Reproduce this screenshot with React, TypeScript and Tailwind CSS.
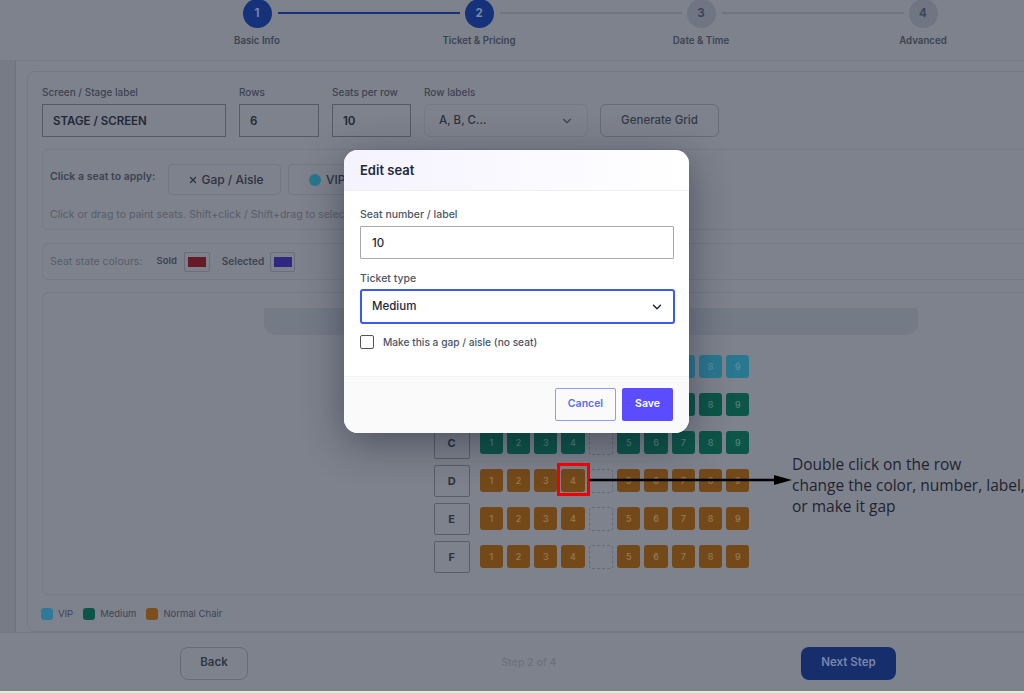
import { ChevronDown, X } from "lucide-react";

const steps = [
  { n: 1, label: "Basic Info", active: true },
  { n: 2, label: "Ticket & Pricing", active: true },
  { n: 3, label: "Date & Time", active: false },
  { n: 4, label: "Advanced", active: false },
];

const rows = [
  { label: "A", kind: "vip" },
  { label: "B", kind: "medium" },
  { label: "C", kind: "medium" },
  { label: "D", kind: "normal" },
  { label: "E", kind: "normal" },
  { label: "F", kind: "normal" },
];

const seatClass: Record<string, string> = {
  vip: "bg-[#2a7790] text-[#5a8ea0]",
  medium: "bg-[#0c5548] text-[#55837a]",
  normal: "bg-[#74491a] text-[#957b58]",
};

function Seat({ n, kind }: { n: number; kind: string }) {
  return (
    <div
      className={`flex h-[23px] w-[23.25px] items-center justify-center rounded-[3px] text-[9px] font-medium ${seatClass[kind]}`}
    >
      {n}
    </div>
  );
}

function SeatRow({ label, kind }: { label: string; kind: string }) {
  return (
    <div className="flex h-[32px] items-center">
      <div className="flex h-[32px] w-[36px] items-center justify-center rounded-[2px] border border-[#585d6a] text-[11px] font-bold text-[#2c3240]">
        {label}
      </div>
      <div className="ml-[10px] flex gap-[4px]">
        {[1, 2, 3, 4].map((n) => (
          <Seat key={n} n={n} kind={kind} />
        ))}
        <div className="h-[24px] w-[24.5px] rounded-[3px] border border-dashed border-[#666b77]" />
        {[5, 6, 7, 8, 9].map((n) => (
          <Seat key={n} n={n} kind={kind} />
        ))}
      </div>
    </div>
  );
}

function Field({ label, value, width }: { label: string; value: string; width: string }) {
  return (
    <div className={width}>
      <div className="mb-[5px] text-[10px] leading-[13px] font-medium text-[#3c4352]">{label}</div>
      <div className="flex h-[33px] items-center border border-[#555a66] pt-[2px] pl-[10px] text-[11.5px] font-semibold text-[#232936]">
        {value}
      </div>
    </div>
  );
}

export default function App() {
  return (
    <div className="relative h-[693px] w-[1024px] overflow-hidden bg-[#7e828c] font-['Inter',sans-serif] text-[#2c3240]">
      {/* stepper */}
      <div className="h-[61px] overflow-hidden border-b border-[#777b86]">
        <div className="-mt-[1px] ml-[146px] flex w-[888px]">
          {steps.map((s, i) => (
            <div key={s.n} className="relative flex w-[222px] flex-col items-center">
              <div
                className={`flex h-[29px] w-[29px] items-center justify-center rounded-full text-[11.5px] font-bold ${
                  s.active ? "bg-[#15327a] text-[#7685a8]" : "bg-[#6f7582] text-[#3e4554]"
                }`}
              >
                {s.n}
              </div>
              {i < 3 && (
                <div
                  className={`absolute top-[13px] left-[132px] h-[2px] w-[182px] ${
                    i === 0 ? "bg-[#15327a]" : "bg-[#6f7582]"
                  }`}
                />
              )}
              <div className="mt-[7px] text-[9.7px] leading-[12px] font-semibold text-[#3c4352]">{s.label}</div>
            </div>
          ))}
        </div>
      </div>

      {/* main */}
      <div className="flex h-[571px]">
        <div className="h-full w-[16px] shrink-0 border-r border-[#6f7380] bg-[#777b86]" />
        <div className="mt-[10px] ml-[11px] h-[561px] w-[1128px] shrink-0 rounded-[8px] border border-[#757985] px-[14px] pt-[14px]">
          <div className="flex items-end">
            <Field label="Screen / Stage label" value="STAGE / SCREEN" width="w-[184px]" />
            <Field label="Rows" value="6" width="ml-[13px] w-[80px]" />
            <Field label="Seats per row" value="10" width="ml-[13px] w-[79px]" />
            <div className="ml-[13px] w-[164px]">
              <div className="mb-[5px] text-[10px] leading-[13px] font-medium text-[#3c4352]">Row labels</div>
              <div className="flex h-[33px] items-center justify-between rounded-[6px] border border-[#767a86] pt-[1px] pr-[13px] pl-[14px] text-[11.5px] font-medium text-[#2c3240]">
                A, B, C...
                <ChevronDown size={14} className="text-[#3e4554]" />
              </div>
            </div>
            <div className="ml-[12px] flex h-[33px] w-[119px] items-center justify-center rounded-[6px] border border-[#666b77] pt-[1px] text-[11.5px] font-medium text-[#343a49]">
              Generate Grid
            </div>
          </div>

          <div className="mt-[12px] h-[81px] rounded-[6px] border border-[#767a86] px-[7px] pt-[14px]">
            <div className="flex">
              <div className="mt-[6px] w-[118px] text-[10.5px] leading-[13px] font-semibold text-[#3c4352]">
                Click a seat to apply:
              </div>
              <div className="flex h-[31px] w-[113px] items-center justify-center rounded-[4px] border border-[#737783] pl-[3px] text-[12px] font-medium text-[#2c3240]">
                <X size={10} strokeWidth={3} className="mr-[3px]" />
                Gap / Aisle
              </div>
              <div className="ml-[7px] flex h-[31px] w-[100px] items-center rounded-[4px] border border-[#737783] pl-[20px] text-[12px] font-medium text-[#2c3240]">
                <span className="mr-[5px] h-[12px] w-[12px] rounded-full bg-[#2a7790]" />
                VIP
              </div>
            </div>
            <div className="mt-[13px] text-[10.5px] leading-[13px] text-[#575d6b]">
              Click or drag to paint seats. Shift+click / Shift+drag to select
            </div>
          </div>

          <div className="mt-[13px] flex h-[37px] items-center rounded-[6px] border border-[#767a86] px-[7px]">
            <span className="text-[10.5px] text-[#575d6b]">Seat state colours:</span>
            <span className="ml-[14px] text-[9.5px] font-semibold text-[#3c4352]">Sold</span>
            <span className="ml-[7px] flex h-[20px] w-[26px] items-center justify-center rounded-[2px] border border-[#6a6f7b]">
              <span className="h-[10px] w-[18px] bg-[#651c27]" />
            </span>
            <span className="ml-[12px] text-[10px] font-semibold text-[#3c4352]">Selected</span>
            <span className="ml-[6px] flex h-[20px] w-[25px] items-center justify-center rounded-[2px] border border-[#6a6f7b]">
              <span className="h-[10px] w-[18px] bg-[#302880]" />
            </span>
          </div>

          <div className="mt-[12px] h-[303px] rounded-[6px] border border-[#767a86] pt-[15px]">
            <div className="mx-auto h-[27px] w-[654px] rounded-t-[3px] rounded-b-[12px] bg-[#747a86]" />
            <div className="mt-[16px] flex flex-col items-center gap-[6px] pl-[1px]">
              {rows.map((r) => (
                <SeatRow key={r.label} label={r.label} kind={r.kind} />
              ))}
            </div>
          </div>

          <div className="mt-[12px] flex items-center text-[9.5px] text-[#3e4554]">
            <span className="-ml-[1px] h-[12px] w-[12px] rounded-[3px] bg-[#2f7a98]" />
            <span className="ml-[5px]">VIP</span>
            <span className="ml-[10px] h-[12px] w-[12px] rounded-[3px] bg-[#0c5548]" />
            <span className="ml-[5px]">Medium</span>
            <span className="ml-[10px] h-[12px] w-[12px] rounded-[3px] bg-[#7a4e1d]" />
            <span className="ml-[5px]">Normal Chair</span>
          </div>
        </div>
      </div>

      {/* footer */}
      <div className="flex h-[59px] items-center border-t border-[#747884] pt-[2px]">
        <div className="ml-[180px] flex h-[33px] w-[68px] items-center justify-center rounded-[8px] border border-[#666b77] text-[11.5px] font-semibold text-[#2f3645]">
          Back
        </div>
        <div className="ml-[253px] w-[56px] text-center text-[10.5px] font-medium whitespace-nowrap text-[#6d717c]">
          Step 2 of 4
        </div>
        <div className="ml-[244px] flex h-[33px] w-[95px] items-center justify-center rounded-[8px] bg-[#162f6c] text-[11.5px] font-semibold text-[#7685a8]">
          Next Step
        </div>
      </div>
      <div className="h-[2px] bg-[#e6ebd8]" />

      {/* dialog */}
      <div className="absolute top-[150px] left-[344px] flex h-[283px] w-[345px] flex-col overflow-hidden rounded-[14px] bg-white shadow-[0_10px_40px_rgba(15,23,42,0.45)]">
        <div className="flex h-[41px] shrink-0 items-center border-b border-[#eeeef3] bg-gradient-to-r from-[#f5f3ff] to-white px-[16px] pt-[1px] text-[13px] font-semibold text-[#1f2937]">
          Edit seat
        </div>
        <div className="flex-1 px-[16px] pt-[17px]">
          <div className="text-[10.5px] leading-[14px] font-medium text-[#4b5563]">Seat number / label</div>
          <div className="mt-[4px] flex h-[33px] w-[314px] items-center rounded-[1px] border border-[#a8a8a8] pt-[2px] pl-[11px] text-[11.5px] font-medium text-[#1f2937]">
            10
          </div>
          <div className="mt-[13px] text-[10.5px] leading-[14px] font-medium text-[#4b5563]">Ticket type</div>
          <div className="mt-[3px] flex h-[35px] w-[315px] items-center justify-between rounded-[3px] border-2 border-[#3b5bf0] pt-[1px] pr-[9px] pl-[10px] text-[11.5px] font-medium text-[#1f2937]">
            Medium
            <ChevronDown size={14} strokeWidth={2.5} className="text-[#1f2937]" />
          </div>
          <div className="mt-[9px] flex items-center">
            <span className="h-[14px] w-[14px] rounded-[2px] border-[1.5px] border-[#555]" />
            <span className="ml-[9px] pt-[2px] text-[10.2px] font-medium text-[#4b5563]">
              Make this a gap / aisle (no seat)
            </span>
          </div>
        </div>
        <div className="flex h-[57px] shrink-0 items-center justify-end gap-[6px] border-t border-[#f3f3f3] bg-[#fafafa] pr-[16px] pb-[2px]">
          <div className="flex h-[33px] w-[61px] items-center justify-center rounded-[2px] border border-[#8f9bf5] text-[10.5px] font-semibold text-[#5c6df0]">
            Cancel
          </div>
          <div className="flex h-[33px] w-[51px] items-center justify-center rounded-[2px] bg-[#5b4dff] text-[10.5px] font-semibold text-white">
            Save
          </div>
        </div>
      </div>

      {/* annotation */}
      <div className="absolute top-[463px] left-[557px] h-[33px] w-[33px] border-[3px] border-[#f00000]" />
      <svg className="absolute top-[470px] left-[589px]" width="204" height="20" viewBox="0 0 204 20">
        <line x1="0" y1="10" x2="190" y2="10" stroke="#000" strokeWidth="2.5" />
        <polygon points="185,5 203,10 185,15" fill="#000" />
      </svg>
      <div className="absolute top-[454px] left-[792px] font-['Open_Sans',sans-serif] text-[15.5px] leading-[21px] whitespace-nowrap text-[#1f2430]">
        Double click on the row
        <br />
        change the color, number, label,
        <br />
        or make it gap
      </div>
    </div>
  );
}
